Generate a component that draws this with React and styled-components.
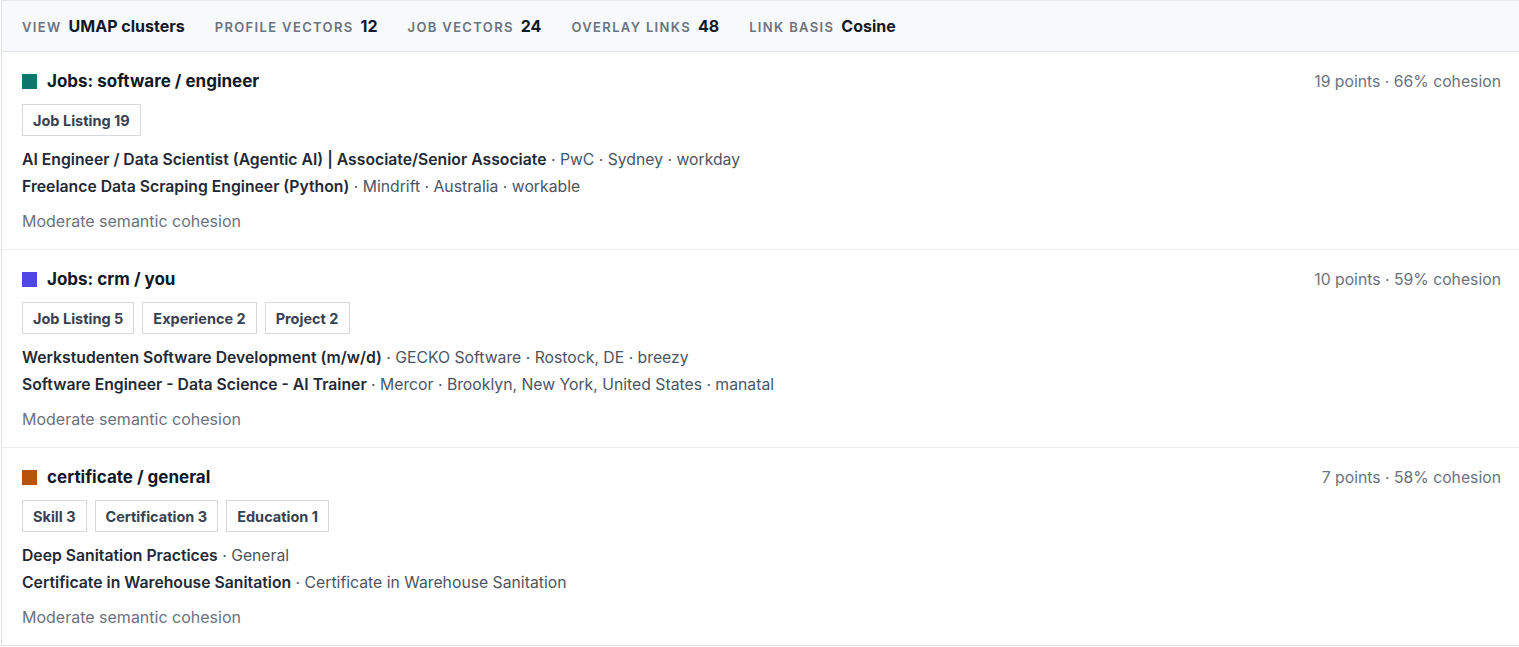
import React from "react";
import styled, { createGlobalStyle } from "styled-components";

const GlobalStyle = createGlobalStyle`
  body {
    margin: 0;
    background: #ffffff;
    font-family: Inter, "Noto Sans", sans-serif;
    overflow: hidden;
  }
`;

const Page = styled.div`
  padding-left: 1px;
`;

const Panel = styled.div`
  width: 1519px;
  border: 1px solid #dfe2e8;
  border-top: none;
  background: #ffffff;
`;

const Toolbar = styled.div`
  display: flex;
  align-items: center;
  gap: 30px;
  height: 52px;
  padding: 0 20px;
  box-sizing: border-box;
  background: #f8f9fb;
  border-top: 1px solid #e3e6eb;
  border-bottom: 1px solid #e3e6eb;
`;

const Stat = styled.div`
  display: flex;
  align-items: baseline;
  gap: 7px;
`;

const StatLabel = styled.span`
  font-size: 13px;
  font-weight: 600;
  letter-spacing: 1.35px;
  text-transform: uppercase;
  color: #6b7280;
`;

const StatValue = styled.span`
  font-size: 16px;
  font-weight: 700;
  color: #111827;
`;

const Cluster = styled.section`
  padding: 18px 20px 17px;
  border-bottom: ${(p) => (p.$last ? "none" : "1px solid #eceef2")};
`;

const TitleRow = styled.div`
  display: flex;
  align-items: center;
  justify-content: space-between;
  height: 22px;
  margin-bottom: 12px;
`;

const Title = styled.div`
  display: flex;
  align-items: center;
  gap: 10px;
  font-size: 17px;
  font-weight: 700;
  color: #111827;
`;

const Swatch = styled.span`
  width: 15px;
  height: 15px;
  background: ${(p) => p.$color};
`;

const Meta = styled.span`
  font-size: 15.75px;
  color: #6b7280;
`;

const Chips = styled.div`
  display: flex;
  gap: 8px;
  margin-bottom: 10px;
`;

const Chip = styled.span`
  display: inline-flex;
  align-items: center;
  height: 32px;
  padding: 0 10px;
  box-sizing: border-box;
  border: 1px solid #d5d8de;
  font-size: 14.5px;
  font-weight: 700;
  color: #374151;
`;

const Item = styled.div`
  font-size: 15.75px;
  line-height: 27px;
  color: #4b5563;
  white-space: nowrap;
`;

const ItemTitle = styled.span`
  font-weight: 600;
  color: #1f2937;
`;

const Note = styled.div`
  margin-top: 10px;
  font-size: 16px;
  line-height: 22px;
  color: #6b7280;
`;

const stats = [
  ["View", "UMAP clusters"],
  ["Profile vectors", "12"],
  ["Job vectors", "24"],
  ["Overlay links", "48"],
  ["Link basis", "Cosine"],
];

const clusters = [
  {
    name: "Jobs: software / engineer",
    color: "#0f766e",
    meta: "19 points · 66% cohesion",
    chips: ["Job Listing 19"],
    items: [
      ["AI Engineer / Data Scientist (Agentic AI) | Associate/Senior Associate", "PwC · Sydney · workday"],
      ["Freelance Data Scraping Engineer (Python)", "Mindrift · Australia · workable"],
    ],
  },
  {
    name: "Jobs: crm / you",
    color: "#4f46e5",
    meta: "10 points · 59% cohesion",
    chips: ["Job Listing 5", "Experience 2", "Project 2"],
    items: [
      ["Werkstudenten Software Development (m/w/d)", "GECKO Software · Rostock, DE · breezy"],
      ["Software Engineer - Data Science - AI Trainer", "Mercor · Brooklyn, New York, United States · manatal"],
    ],
  },
  {
    name: "certificate / general",
    color: "#b45309",
    meta: "7 points · 58% cohesion",
    chips: ["Skill 3", "Certification 3", "Education 1"],
    items: [
      ["Deep Sanitation Practices", "General"],
      ["Certificate in Warehouse Sanitation", "Certificate in Warehouse Sanitation"],
    ],
  },
];

export default function App() {
  return (
    <Page>
      <GlobalStyle />
      <Panel>
        <Toolbar>
          {stats.map(([label, value]) => (
            <Stat key={label}>
              <StatLabel>{label}</StatLabel>
              <StatValue>{value}</StatValue>
            </Stat>
          ))}
        </Toolbar>
        {clusters.map((c, i) => (
          <Cluster key={c.name} $last={i === clusters.length - 1}>
            <TitleRow>
              <Title>
                <Swatch $color={c.color} />
                {c.name}
              </Title>
              <Meta>{c.meta}</Meta>
            </TitleRow>
            <Chips>
              {c.chips.map((chip) => (
                <Chip key={chip}>{chip}</Chip>
              ))}
            </Chips>
            {c.items.map(([title, rest]) => (
              <Item key={title}>
                <ItemTitle>{title}</ItemTitle> · {rest}
              </Item>
            ))}
            <Note>Moderate semantic cohesion</Note>
          </Cluster>
        ))}
      </Panel>
    </Page>
  );
}
